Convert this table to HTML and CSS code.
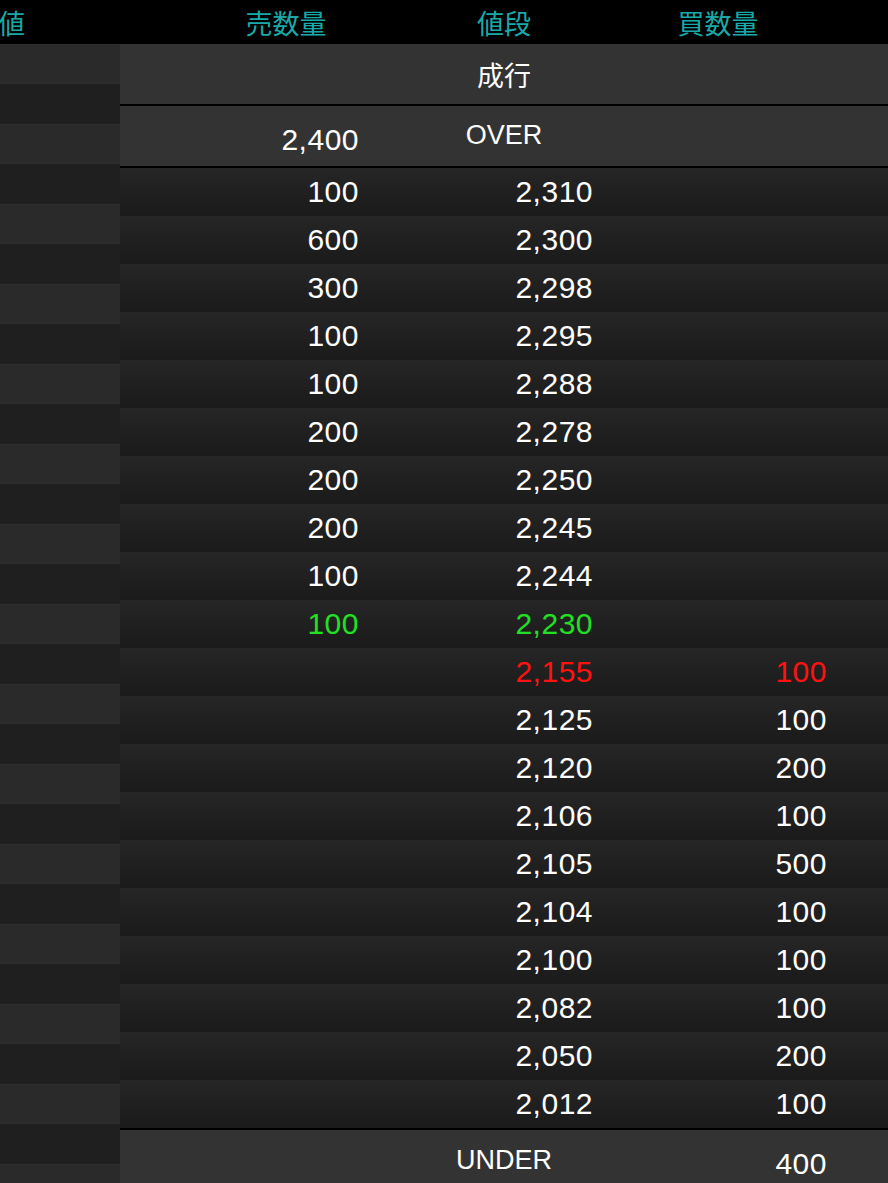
FILE: index.html
```html
<!DOCTYPE html>
<html lang="ja">
<head>
    <meta charset="UTF-8">
    <meta name="viewport" content="width=device-width, initial-scale=1.0">
    <title>板情報</title>
    <link rel="stylesheet" href="styles.css">
</head>
<body>
    <div class="header">
        <div class="h-side">値</div>
        <div class="h-sell">売数量</div>
        <div class="h-price">値段</div>
        <div class="h-buy">買数量</div>
    </div>

    <div class="content">
        <div class="side">
            <div class="stripe"></div><div class="stripe"></div><div class="stripe"></div><div class="stripe"></div>
            <div class="stripe"></div><div class="stripe"></div><div class="stripe"></div><div class="stripe"></div>
            <div class="stripe"></div><div class="stripe"></div><div class="stripe"></div><div class="stripe"></div>
            <div class="stripe"></div><div class="stripe"></div><div class="stripe"></div><div class="stripe"></div>
            <div class="stripe"></div><div class="stripe"></div><div class="stripe"></div><div class="stripe"></div>
            <div class="stripe"></div><div class="stripe"></div><div class="stripe"></div><div class="stripe"></div>
            <div class="stripe"></div><div class="stripe"></div><div class="stripe"></div><div class="stripe"></div>
            <div class="stripe"></div><div class="stripe"></div>
        </div>

        <div class="board">
            <div class="row special market">
                <div class="sell"></div>
                <div class="label">成行</div>
                <div class="buy"></div>
            </div>
            <div class="row special over">
                <div class="sell">2,400</div>
                <div class="label">OVER</div>
                <div class="buy"></div>
            </div>

            <div class="row"><div class="sell">100</div><div class="price">2,310</div><div class="buy"></div></div>
            <div class="row"><div class="sell">600</div><div class="price">2,300</div><div class="buy"></div></div>
            <div class="row"><div class="sell">300</div><div class="price">2,298</div><div class="buy"></div></div>
            <div class="row"><div class="sell">100</div><div class="price">2,295</div><div class="buy"></div></div>
            <div class="row"><div class="sell">100</div><div class="price">2,288</div><div class="buy"></div></div>
            <div class="row"><div class="sell">200</div><div class="price">2,278</div><div class="buy"></div></div>
            <div class="row"><div class="sell">200</div><div class="price">2,250</div><div class="buy"></div></div>
            <div class="row"><div class="sell">200</div><div class="price">2,245</div><div class="buy"></div></div>
            <div class="row"><div class="sell">100</div><div class="price">2,244</div><div class="buy"></div></div>
            <div class="row ask-best"><div class="sell">100</div><div class="price">2,230</div><div class="buy"></div></div>
            <div class="row bid-best"><div class="sell"></div><div class="price">2,155</div><div class="buy">100</div></div>
            <div class="row"><div class="sell"></div><div class="price">2,125</div><div class="buy">100</div></div>
            <div class="row"><div class="sell"></div><div class="price">2,120</div><div class="buy">200</div></div>
            <div class="row"><div class="sell"></div><div class="price">2,106</div><div class="buy">100</div></div>
            <div class="row"><div class="sell"></div><div class="price">2,105</div><div class="buy">500</div></div>
            <div class="row"><div class="sell"></div><div class="price">2,104</div><div class="buy">100</div></div>
            <div class="row"><div class="sell"></div><div class="price">2,100</div><div class="buy">100</div></div>
            <div class="row"><div class="sell"></div><div class="price">2,082</div><div class="buy">100</div></div>
            <div class="row"><div class="sell"></div><div class="price">2,050</div><div class="buy">200</div></div>
            <div class="row"><div class="sell"></div><div class="price">2,012</div><div class="buy">100</div></div>

            <div class="row special under">
                <div class="sell"></div>
                <div class="label">UNDER</div>
                <div class="buy">400</div>
            </div>
        </div>
    </div>
</body>
</html>
```

FILE: styles.css
```css
body {
    margin: 0;
    height: 100vh;
    overflow: hidden;
    background-color: #000;
    font-family: 'Liberation Sans', Arial, 'Noto Sans CJK JP', sans-serif;
    color: #fff;
}

/* header */
.header {
    display: grid;
    grid-template-columns: 120px 256px 256px 256px;
    height: 44px;
    align-items: center;
    background-color: #000;
    color: #1aa9a9;
    font-family: 'Noto Sans CJK JP', sans-serif;
    font-size: 27px;
    line-height: 1;
}

.h-side {
    text-align: left;
    margin-left: -2px;
}

.h-sell {
    text-align: center;
    padding-left: 76px;
}

.h-price {
    text-align: center;
}

.h-buy {
    text-align: center;
    padding-right: 84px;
}

.content {
    display: flex;
}

/* left column, cut off */
.side {
    width: 120px;
    flex-shrink: 0;
}

.stripe {
    height: 40px;
    box-sizing: border-box;
    background-color: #1f1f1f;
}

.stripe:nth-child(odd) {
    background-color: #2a2a2a;
    border-top: 1px solid #2e2e2e;
    border-bottom: 2px solid #2d2d2d;
}

/* board */
.board {
    flex: 1;
}

.row {
    display: grid;
    grid-template-columns: 256px 256px 256px;
    height: 48px;
    align-items: center;
    background: linear-gradient(#262626, #1a1a1a);
    font-size: 30px;
    letter-spacing: 0.5px;
}

.sell,
.price,
.buy {
    text-align: right;
}

.sell {
    padding-right: 17px;
}

.price {
    padding-right: 39px;
}

.buy {
    padding-right: 61px;
}

.special {
    height: 60px;
    background: #333333;
}

.special .label {
    text-align: center;
    font-size: 27px;
    letter-spacing: 0;
}

.market {
    border-bottom: 2px solid #000;
}

.market .label {
    font-family: 'Noto Sans CJK JP', sans-serif;
    font-size: 27px;
}

.over {
    border-bottom: 2px solid #000;
}

.over .sell {
    padding-top: 8px;
}

.over .label {
    padding-bottom: 2px;
}

.under {
    border-top: 2px solid #000;
}

.under .buy {
    padding-top: 8px;
}

.ask-best .sell,
.ask-best .price {
    color: #22e022;
}

.bid-best .price,
.bid-best .buy {
    color: #ff1111;
}
```
